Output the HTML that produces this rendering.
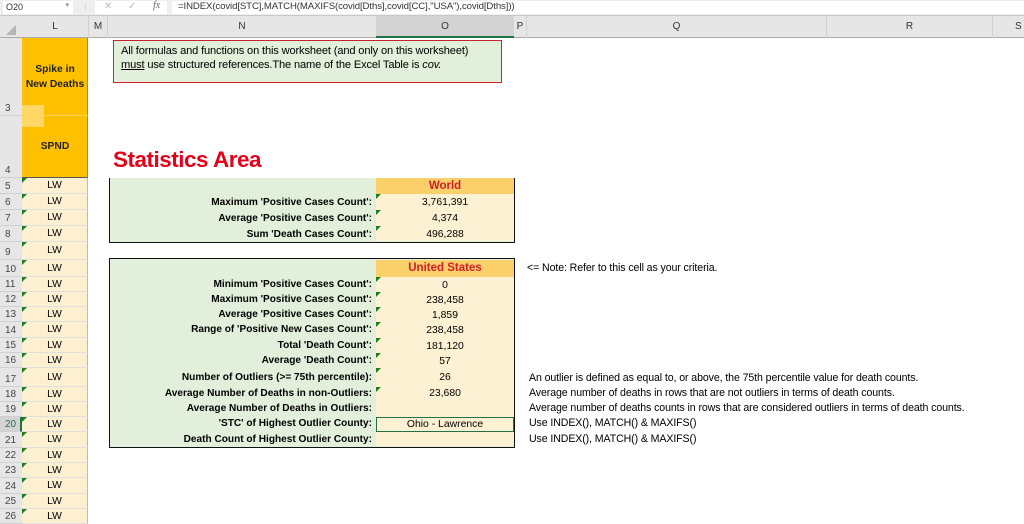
<!DOCTYPE html>
<html><head><meta charset="utf-8"><style>
*{margin:0;padding:0;box-sizing:border-box}
body{width:1024px;height:519px;overflow:hidden;background:#fff;font-family:"Liberation Sans",sans-serif;font-size:10px;color:#000;position:relative}
.a{position:absolute}
.rh{position:absolute;left:0;width:22px;background:#e6e6e6;border-bottom:1px solid #d0d0d0;color:#444;font-size:10px;display:flex;align-items:flex-end;padding-left:5px;padding-bottom:1px}
.lc{position:absolute;left:22px;width:66px;background:#fdf0d0;border-bottom:1px solid #e0e0e0;border-right:1px solid #bbb;text-align:center;font-size:10.3px;display:flex;align-items:center;justify-content:center}
.tri{position:absolute;left:0;top:0;width:0;height:0;border-top:5px solid #1e7b1e;border-right:5px solid transparent}
.lab{position:absolute;left:109px;width:267px;text-align:right;padding-right:4px;font-weight:bold;font-size:10.1px;white-space:nowrap}
.val{position:absolute;left:376px;width:138px;text-align:center;font-size:10.4px;background:#fdf1d3}
.tri2{position:absolute;left:376px;width:0;height:0;border-top:5px solid #1e7b1e;border-right:5px solid transparent}
.nt{position:absolute;left:529px;font-size:10.6px;white-space:nowrap;letter-spacing:-0.1px}
</style></head><body>
<div class="a" style="left:0;top:0;width:1024px;height:16px;background:#efefef;border-bottom:1px solid #c8c8c8"></div>
<div class="a" style="left:3px;top:1px;width:70px;height:13px;background:#fff;font-size:9px;padding:1px 3px;color:#333">O20<span style="position:absolute;right:4px;top:0;font-size:7px;color:#888">▾</span></div>
<div class="a" style="left:84px;top:2px;font-size:9px;color:#bbb">⁝</div>
<div class="a" style="left:95px;top:1px;width:72px;height:13px;background:#fff"></div>
<div class="a" style="left:104px;top:1px;font-size:10px;color:#bbb">✕</div>
<div class="a" style="left:128px;top:1px;font-size:10px;color:#bbb">✓</div>
<div class="a" style="left:153px;top:0;font-size:10px;color:#666;font-family:'Liberation Serif',serif;font-style:italic">fx</div>
<div class="a" style="left:172px;top:1px;width:852px;height:13px;background:#fff;font-size:9.6px;padding:0 6px;color:#333;letter-spacing:-0.1px">=INDEX(covid[STC],MATCH(MAXIFS(covid[Dths],covid[CC],"USA"),covid[Dths]))</div>
<div class="a" style="left:0;top:16px;width:1024px;height:22px;background:#e6e6e6;border-bottom:1px solid #ababab"></div>
<div class="a" style="left:6px;top:25px;width:0;height:0;border-bottom:10px solid #b5b5b5;border-left:10px solid transparent"></div>
<div class="a" style="left:22px;top:16px;width:66px;height:22px;text-align:center;line-height:22px;color:#333">L</div>
<div class="a" style="left:88px;top:16px;width:20px;height:22px;text-align:center;line-height:22px;color:#333;border-left:1px solid #d0d0d0;border-right:1px solid #d0d0d0">M</div>
<div class="a" style="left:108px;top:16px;width:268px;height:22px;text-align:center;line-height:22px;color:#333">N</div>
<div class="a" style="left:376px;top:16px;width:138px;height:22px;background:#d3d3d3;border-bottom:2px solid #217346"></div>
<div class="a" style="left:376px;top:16px;width:138px;height:22px;text-align:center;line-height:22px;color:#333">O</div>
<div class="a" style="left:514px;top:16px;width:13px;height:22px;text-align:center;line-height:22px;color:#333;border-right:1px solid #d0d0d0">P</div>
<div class="a" style="left:527px;top:16px;width:300px;height:22px;text-align:center;line-height:22px;color:#333;border-right:1px solid #d0d0d0">Q</div>
<div class="a" style="left:827px;top:16px;width:166px;height:22px;text-align:center;line-height:22px;color:#333;border-right:1px solid #d0d0d0">R</div>
<div class="a" style="left:1015px;top:16px;height:22px;line-height:22px;color:#333">S</div>
<div class="rh" style="top:38px;height:78px;">3</div>
<div class="rh" style="top:116px;height:62px;">4</div>
<div class="a" style="left:22px;top:38px;width:66px;height:140px;background:#ffc000;border-right:1px solid #888;border-bottom:1px solid #555"></div>
<div class="a" style="left:22px;top:105px;width:22px;height:22px;background:#ffd766"></div>
<div class="a" style="left:44px;top:115px;width:44px;height:1px;background:#ffcf50"></div>
<div class="a" style="left:22px;top:62px;width:66px;text-align:center;font-weight:bold;font-size:10.3px;line-height:15px;color:#222">Spike in<br>New Deaths</div>
<div class="a" style="left:22px;top:141px;width:66px;text-align:center;font-weight:bold;font-size:10.3px;color:#222">SPND</div>
<div class="a" style="left:113px;top:40px;width:389px;height:43px;background:#e2efda;border:1.5px solid #d0202a;padding:3px 7px;font-size:11.1px;line-height:14px;letter-spacing:-0.15px;white-space:nowrap">All formulas and functions on this worksheet (and only on this worksheet)<br><u>must</u> use structured references.The name of the Excel Table is <i>cov.</i></div>
<div class="a" style="left:113px;top:147px;font-size:22.5px;font-weight:bold;color:#e3001b;letter-spacing:-0.5px">Statistics Area</div>
<div class="rh" style="top:178px;height:16px">5</div><div class="lc" style="top:178px;height:16px"><span class="tri"></span>LW</div>
<div class="rh" style="top:194px;height:16px">6</div><div class="lc" style="top:194px;height:16px"><span class="tri"></span>LW</div>
<div class="rh" style="top:210px;height:16px">7</div><div class="lc" style="top:210px;height:16px"><span class="tri"></span>LW</div>
<div class="rh" style="top:226px;height:16px">8</div><div class="lc" style="top:226px;height:16px"><span class="tri"></span>LW</div>
<div class="rh" style="top:242px;height:18px">9</div><div class="lc" style="top:242px;height:18px"><span class="tri"></span>LW</div>
<div class="rh" style="top:260px;height:17px">10</div><div class="lc" style="top:260px;height:17px"><span class="tri"></span>LW</div>
<div class="rh" style="top:277px;height:15px">11</div><div class="lc" style="top:277px;height:15px"><span class="tri"></span>LW</div>
<div class="rh" style="top:292px;height:15px">12</div><div class="lc" style="top:292px;height:15px"><span class="tri"></span>LW</div>
<div class="rh" style="top:307px;height:15px">13</div><div class="lc" style="top:307px;height:15px"><span class="tri"></span>LW</div>
<div class="rh" style="top:322px;height:16px">14</div><div class="lc" style="top:322px;height:16px"><span class="tri"></span>LW</div>
<div class="rh" style="top:338px;height:15px">15</div><div class="lc" style="top:338px;height:15px"><span class="tri"></span>LW</div>
<div class="rh" style="top:353px;height:15px">16</div><div class="lc" style="top:353px;height:15px"><span class="tri"></span>LW</div>
<div class="rh" style="top:368px;height:19px">17</div><div class="lc" style="top:368px;height:19px"><span class="tri"></span>LW</div>
<div class="rh" style="top:387px;height:15px">18</div><div class="lc" style="top:387px;height:15px"><span class="tri"></span>LW</div>
<div class="rh" style="top:402px;height:15px">19</div><div class="lc" style="top:402px;height:15px"><span class="tri"></span>LW</div>
<div class="rh" style="top:417px;height:15px;background:#d3d3d3;color:#217346;border-right:2px solid #217346">20</div><div class="lc" style="top:417px;height:15px"><span class="tri"></span>LW</div>
<div class="rh" style="top:432px;height:16px">21</div><div class="lc" style="top:432px;height:16px"><span class="tri"></span>LW</div>
<div class="rh" style="top:448px;height:15px">22</div><div class="lc" style="top:448px;height:15px"><span class="tri"></span>LW</div>
<div class="rh" style="top:463px;height:15px">23</div><div class="lc" style="top:463px;height:15px"><span class="tri"></span>LW</div>
<div class="rh" style="top:478px;height:16px">24</div><div class="lc" style="top:478px;height:16px"><span class="tri"></span>LW</div>
<div class="rh" style="top:494px;height:15px">25</div><div class="lc" style="top:494px;height:15px"><span class="tri"></span>LW</div>
<div class="rh" style="top:509px;height:15px">26</div><div class="lc" style="top:509px;height:15px"><span class="tri"></span>LW</div>
<div class="a" style="left:109px;top:178px;width:406px;height:65px;background:#e2efda;border:1.5px solid #111;border-top:none"></div>
<div class="val" style="top:178px;height:16px;background:#fbcf6a;color:#d0202a;font-weight:bold;font-size:11.5px;line-height:17px">World</div>
<div class="val" style="top:194px;height:16px;line-height:18px">3,761,391</div>
<div class="val" style="top:210px;height:16px;line-height:18px">4,374</div>
<div class="val" style="top:226px;height:15px;line-height:17px">496,288</div>
<div class="lab" style="top:197px">Maximum 'Positive Cases Count':</div><div class="tri2" style="top:194px"></div>
<div class="lab" style="top:213px">Average 'Positive Cases Count':</div><div class="tri2" style="top:210px"></div>
<div class="lab" style="top:229px">Sum 'Death Cases Count':</div><div class="tri2" style="top:226px"></div>
<div class="a" style="left:109px;top:258px;width:406px;height:190px;background:#e2efda;border:1.5px solid #111"></div>
<div class="val" style="top:260px;height:17px;background:#fbcf6a;color:#d0202a;font-weight:bold;font-size:11.5px;line-height:17px">United States</div>
<div class="val" style="top:277px;height:15px;line-height:17px">0</div>
<div class="val" style="top:292px;height:15px;line-height:17px">238,458</div>
<div class="val" style="top:307px;height:15px;line-height:17px">1,859</div>
<div class="val" style="top:322px;height:16px;line-height:17px">238,458</div>
<div class="val" style="top:338px;height:15px;line-height:17px">181,120</div>
<div class="val" style="top:353px;height:15px;line-height:17px">57</div>
<div class="val" style="top:368px;height:19px;line-height:20px">26</div>
<div class="val" style="top:387px;height:15px;line-height:14px">23,680</div>
<div class="val" style="top:402px;height:15px"></div>
<div class="val" style="top:417px;height:15px;line-height:14px;border:1px solid #217346;background:#fdf1d3">Ohio - Lawrence</div>
<div class="val" style="top:432px;height:14px"></div>
<div class="lab" style="top:279px">Minimum 'Positive Cases Count':</div><div class="tri2" style="top:277px"></div>
<div class="lab" style="top:294px">Maximum 'Positive Cases Count':</div><div class="tri2" style="top:292px"></div>
<div class="lab" style="top:309px">Average 'Positive Cases Count':</div><div class="tri2" style="top:307px"></div>
<div class="lab" style="top:324px">Range of 'Positive New Cases Count':</div><div class="tri2" style="top:322px"></div>
<div class="lab" style="top:340px">Total 'Death Count':</div><div class="tri2" style="top:338px"></div>
<div class="lab" style="top:355px">Average 'Death Count':</div><div class="tri2" style="top:353px"></div>
<div class="lab" style="top:372px">Number of Outliers (&gt;= 75th percentile):</div><div class="tri2" style="top:368px"></div>
<div class="lab" style="top:388px">Average Number of Deaths in non-Outliers:</div><div class="tri2" style="top:387px"></div>
<div class="lab" style="top:403px">Average Number of Deaths in Outliers:</div>
<div class="lab" style="top:418px">'STC' of Highest Outlier County:</div>
<div class="lab" style="top:434px">Death Count of Highest Outlier County:</div>
<div class="nt" style="left:527px;top:262px">&lt;= Note: Refer to this cell as your criteria.</div>
<div class="nt" style="top:372px">An outlier is defined as equal to, or above, the 75th percentile value for death counts.</div>
<div class="nt" style="top:387px">Average number of deaths in rows that are not outliers in terms of death counts.</div>
<div class="nt" style="top:402px">Average number of deaths counts in rows that are considered outliers in terms of death counts.</div>
<div class="nt" style="top:417px">Use INDEX(), MATCH() &amp; MAXIFS()</div>
<div class="nt" style="top:433px">Use INDEX(), MATCH() &amp; MAXIFS()</div>
</body></html>
